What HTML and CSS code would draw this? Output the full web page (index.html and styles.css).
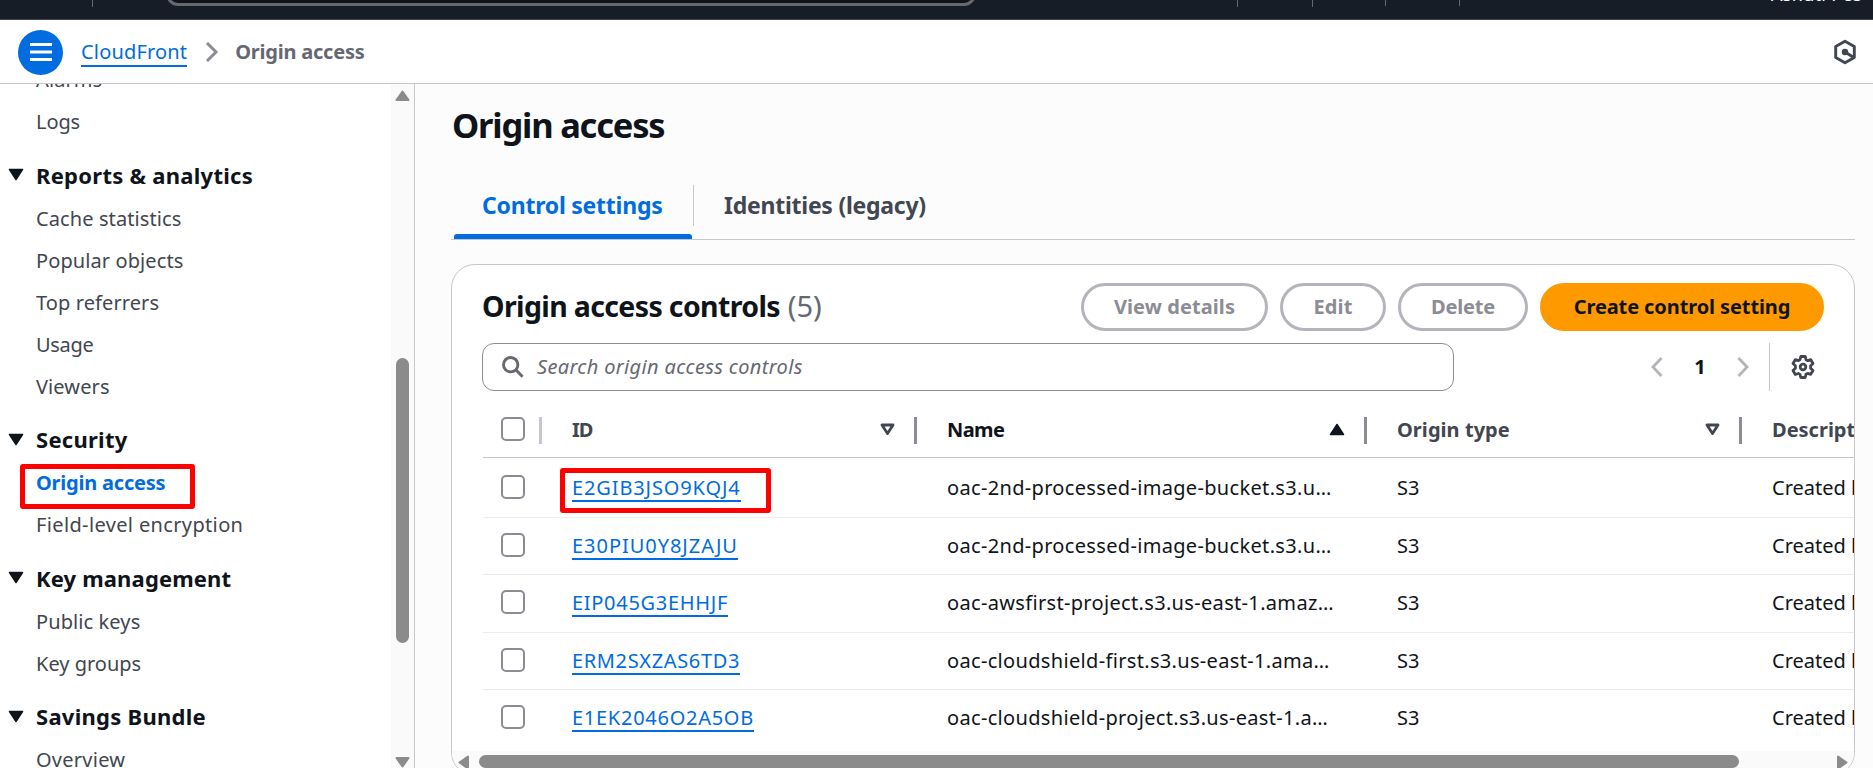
FILE: index.html
```html
<!DOCTYPE html>
<html lang="en">
<head>
<meta charset="utf-8">
<title>Origin access - CloudFront</title>
<link rel="stylesheet" href="styles.css">
</head>
<body>
<header class="topbar">
  <i class="tick tick-left"></i>
  <div class="top-search"></div>
  <i class="tick tick-a"></i><i class="tick tick-b"></i><i class="tick tick-c"></i><i class="tick tick-d"></i>
  <span class="account">Ashutl Pes</span>
</header>
<nav class="crumbs">
  <button class="menu-btn" aria-label="Menu"><svg width="22" height="18" viewBox="0 0 22 18"><path d="M0 1.5h22M0 9h22M0 16.5h22" stroke="#fff" stroke-width="2.8"/></svg></button>
  <a class="link crumb-link">CloudFront</a>
  <svg class="crumb-sep" width="14" height="22" viewBox="0 0 14 22"><path d="M2 2l9 9-9 9" fill="none" stroke="#8c8c94" stroke-width="3"/></svg>
  <span class="crumb-current">Origin access</span>
  <svg class="hex" width="24" height="26" viewBox="0 0 24 26"><path d="M12 2.3l9.3 5.2v11L12 23.700l-9.300-5.200v-11z" fill="none" stroke="#424650" stroke-width="2.900" stroke-linejoin="round"/><circle cx="12" cy="13" r="3.200" fill="#424650"/><path d="M12 13l8 5" stroke="#424650" stroke-width="3"/></svg>
</nav>
<div class="shell">
  <aside class="side">
    <div class="side-list">
      <a class="item">Alarms</a>
      <a class="item logs">Logs</a>
      <h3 class="group"><svg width="16" height="13" viewBox="0 0 16 13"><path d="M1.500 1.500h13L8 11.500z" fill="#0f141a" stroke="#0f141a" stroke-width="1.500" stroke-linejoin="round"/></svg><span class="g1">Reports &amp; analytics</span></h3>
      <a class="item">Cache statistics</a>
      <a class="item">Popular objects</a>
      <a class="item">Top referrers</a>
      <a class="item usage">Usage</a>
      <a class="item">Viewers</a>
      <h3 class="group"><svg width="16" height="13" viewBox="0 0 16 13"><path d="M1.500 1.500h13L8 11.500z" fill="#0f141a" stroke="#0f141a" stroke-width="1.500" stroke-linejoin="round"/></svg><span class="g2">Security</span></h3>
      <a class="item active">Origin access</a>
      <a class="item field">Field-level encryption</a>
      <h3 class="group"><svg width="16" height="13" viewBox="0 0 16 13"><path d="M1.500 1.500h13L8 11.500z" fill="#0f141a" stroke="#0f141a" stroke-width="1.500" stroke-linejoin="round"/></svg><span class="g3">Key management</span></h3>
      <a class="item">Public keys</a>
      <a class="item keyg">Key groups</a>
      <h3 class="group"><svg width="16" height="13" viewBox="0 0 16 13"><path d="M1.500 1.500h13L8 11.500z" fill="#0f141a" stroke="#0f141a" stroke-width="1.500" stroke-linejoin="round"/></svg><span class="g4">Savings Bundle</span></h3>
      <a class="item over">Overview</a>
    </div>
    <div class="vscroll">
      <svg width="15" height="11" viewBox="0 0 15 11"><path d="M7.500 1.500L13.500 10h-12z" fill="#8b8b8b" stroke="#8b8b8b" stroke-width="2" stroke-linejoin="round"/></svg>
      <i class="vthumb"></i>
      <svg class="vdown" width="15" height="11" viewBox="0 0 15 11"><path d="M7.500 9.500L13.500 1h-12z" fill="#8b8b8b" stroke="#8b8b8b" stroke-width="2" stroke-linejoin="round"/></svg>
    </div>
  </aside>
  <main class="main">
    <h1>Origin access</h1>
    <div class="tabs">
      <a class="tab tab-on">Control settings</a>
      <a class="tab tab-off">Identities (legacy)</a>
    </div>
    <section class="card">
      <div class="card-head">
        <h2>Origin access controls <span class="count">(5)</span></h2>
        <div class="actions">
          <button class="btn b-view">View details</button>
          <button class="btn b-edit">Edit</button>
          <button class="btn b-del">Delete</button>
          <button class="btn primary">Create control setting</button>
        </div>
      </div>
      <div class="tools">
        <div class="search">
          <svg width="24" height="24" viewBox="0 0 24 24"><circle cx="9.700" cy="9.700" r="7.200" fill="none" stroke="#656871" stroke-width="2.900"/><path d="M14.800 14.800l6.800 6.900" stroke="#656871" stroke-width="3"/></svg>
          <span>Search origin access controls</span>
        </div>
        <div class="pager">
          <svg width="12" height="20" viewBox="0 0 12 20"><path d="M10.500 1L2 10l8.500 9" fill="none" stroke="#b4b4bb" stroke-width="2.800"/></svg>
          <b>1</b>
          <svg width="12" height="20" viewBox="0 0 12 20"><path d="M1.500 1l8.500 9-8.500 9" fill="none" stroke="#b4b4bb" stroke-width="2.800"/></svg>
        </div>
        <div class="prefs">
          <svg width="24" height="24" viewBox="0 0 24 24" fill="none" stroke="#424650" stroke-width="2.800" stroke-linejoin="round"><path d="M9.800 1.500h4.400l.8 3.200 1.600.900 3.100-1 2.300 3.900-2.400 2.300v2.400l2.400 2.300-2.300 3.900-3.100-1-1.600.900-.8 3.200H9.800L9 19.400l-1.600-.900-3.100 1L2 15.500l2.400-2.300v-2.400L2 8.500l2.300-3.900 3.100 1L9 4.700z"/><circle cx="12" cy="12" r="2.800"/></svg>
        </div>
      </div>
      <div class="table">
        <div class="row head">
          <div class="c-check"><i class="box"></i></div>
          <div class="c-id"><span class="t-id">ID</span><svg width="15" height="13" viewBox="0 0 15 13"><path d="M2 2h11L7.500 10.500z" fill="none" stroke="#424650" stroke-width="2.800" stroke-linejoin="round"/></svg></div>
          <div class="c-name dark"><span class="t-name">Name</span><svg width="16" height="13" viewBox="0 0 16 13"><path d="M8 1.500l6.500 10h-13z" fill="#0f141a" stroke="#0f141a" stroke-width="1.500" stroke-linejoin="round"/></svg></div>
          <div class="c-type"><span class="t-type">Origin type</span><svg width="15" height="13" viewBox="0 0 15 13"><path d="M2 2h11L7.500 10.500z" fill="none" stroke="#424650" stroke-width="2.800" stroke-linejoin="round"/></svg></div>
          <div class="c-desc">Description</div>
        </div>
        <div class="row r1"><div class="c-check"><i class="box"></i></div><div class="c-id"><a class="link">E2GIB3JSO9KQJ4</a><i class="mark"></i></div><div class="c-name">oac-2nd-processed-image-bucket.s3.u…</div><div class="c-type">S3</div><div class="c-desc">Created by CloudFront</div></div>
        <div class="row r2"><div class="c-check"><i class="box"></i></div><div class="c-id"><a class="link">E30PIU0Y8JZAJU</a></div><div class="c-name">oac-2nd-processed-image-bucket.s3.u…</div><div class="c-type">S3</div><div class="c-desc">Created by CloudFront</div></div>
        <div class="row r3"><div class="c-check"><i class="box"></i></div><div class="c-id"><a class="link">EIP045G3EHHJF</a></div><div class="c-name">oac-awsfirst-project.s3.us-east-1.amaz…</div><div class="c-type">S3</div><div class="c-desc">Created by CloudFront</div></div>
        <div class="row r4"><div class="c-check"><i class="box"></i></div><div class="c-id"><a class="link">ERM2SXZAS6TD3</a></div><div class="c-name">oac-cloudshield-first.s3.us-east-1.ama…</div><div class="c-type">S3</div><div class="c-desc">Created by CloudFront</div></div>
        <div class="row r5"><div class="c-check"><i class="box"></i></div><div class="c-id"><a class="link">E1EK2046O2A5OB</a></div><div class="c-name">oac-cloudshield-project.s3.us-east-1.a…</div><div class="c-type">S3</div><div class="c-desc">Created by CloudFront</div></div>
      </div>
      <div class="hscroll">
        <svg width="11" height="15" viewBox="0 0 11 15"><path d="M1.500 7.500L10 1.500v12z" fill="#8b8b8b" stroke="#8b8b8b" stroke-width="2" stroke-linejoin="round"/></svg>
        <i class="hthumb"></i>
        <svg class="hright" width="11" height="15" viewBox="0 0 11 15"><path d="M9.500 7.500L1 1.500v12z" fill="#8b8b8b" stroke="#8b8b8b" stroke-width="2" stroke-linejoin="round"/></svg>
      </div>
    </section>
  </main>
</div>
</body>
</html>
```
FILE: styles.css
```css
*,*::before,*::after{box-sizing:border-box}
body{margin:0;width:1873px;height:768px;overflow:hidden;background:#fff;color:#0f141a;font:20px/42px "Noto Sans",sans-serif;display:flex;flex-direction:column}
h1,h2,h3{margin:0}
svg{display:block;flex:none}
button{font:inherit;margin:0;padding:0}

.topbar{position:relative;flex:none;height:20px;background:#161d26;border-bottom:1px solid #424650;overflow:hidden}
.tick{position:absolute;top:0;width:1px;height:6px;background:#656871}
.tick-left{left:92px;height:7px}
.tick-a{left:1237px;height:7px}.tick-b{left:1312px;height:7px}.tick-c{left:1385px}.tick-d{left:1459px}
.top-search{position:absolute;left:166px;top:-30px;width:810px;height:36px;border:3px solid #656871;border-radius:12px;background:#0f141a}
.account{position:absolute;left:1771px;top:-16px;font-size:18px;line-height:20px;color:#fff;font-weight:400;letter-spacing:.3px}

.crumbs{flex:none;height:64px;border-bottom:1px solid #c6c6cd;display:flex;align-items:center;padding:0 16px 0 18px}
.menu-btn{width:45px;height:45px;border:0;border-radius:50%;background:#006ce0;display:flex;align-items:center;justify-content:center;margin:1px 18px 0 0}
.link{color:#006ce0;border-bottom:2px solid #006ce0;line-height:26px;height:28px;display:block}
.crumb-link{letter-spacing:.17px;margin-top:2px}
.crumb-sep{margin:0 16px 0 18px}
.crumb-current{font-weight:700;letter-spacing:-.22px;color:#656871}
.hex{margin-left:auto}

.shell{flex:1;min-height:0;display:flex}
.side{flex:none;width:415px;border-right:1px solid #c6c6cd;display:flex;overflow:hidden}
.side-list{flex:1;display:flex;flex-direction:column;margin-top:-25px;padding-left:8px}
.item{flex:none;height:42px;padding-left:28px;color:#424650;position:relative;letter-spacing:.1px}
.item.active{font-weight:700;color:#006ce0;letter-spacing:-.22px}
.active::after{content:"";position:absolute;left:12px;top:2px;width:175px;height:45px;border:5px solid #f00;border-radius:3px}
.item.logs{letter-spacing:-.1px}.item.usage{letter-spacing:-.3px}.item.field{letter-spacing:.36px}.item.keyg{letter-spacing:0}.item.over{letter-spacing:.25px}
.group{flex:none;height:54.5px;padding-top:8.5px;font-size:22px;font-weight:700;display:flex;align-items:center}
.group svg{margin:0 12px 0 0}
.g1,.g2,.g4{letter-spacing:.27px}.g3{letter-spacing:.15px}
.vscroll{flex:none;width:23px;background:#fafafa;padding:6px 4px 0;height:684px}
.vthumb{display:block;width:13px;height:285px;border-radius:7px;background:#8b8b8b;margin:257px 0 0 1px}
.vdown{margin-top:114px}

.main{flex:1;min-width:0;background:#fcfcfd;padding:19px 18px 0 36px;overflow:hidden}
h1{font-size:34.500px;line-height:44px;font-weight:700;letter-spacing:-1.200px;padding-left:1px}
.tabs{display:flex;height:65px;margin-top:28px;border-bottom:1px solid #c6c6cd;font-size:23px;font-weight:700;width:1404px}
.tab{position:relative;line-height:60px;height:64px;letter-spacing:-.23px}
.tab-on{width:243px;padding-left:31px;color:#006ce0}
.tab-on::before{content:"";position:absolute;left:3px;right:2px;bottom:0;height:5px;border-radius:3px 3px 0 0;background:#006ce0}
.tab-on::after{content:"";position:absolute;right:0;top:10px;width:1px;height:41px;background:#c6c6cd}
.tab-off{padding-left:30px;color:#424650;letter-spacing:-.25px}
.card{margin-top:24px;width:1404px;height:512px;border:1px solid #c6c6cd;border-radius:24px;background:#fff;overflow:hidden;display:flex;flex-direction:column}
.card-head{flex:none;display:flex;justify-content:space-between;padding:18px 30px 0 30px}
h2{font-size:28.500px;font-weight:700;letter-spacing:-.640px;line-height:46px;white-space:pre}
.count{font-size:29px;font-weight:400;color:#656871;letter-spacing:0;margin-left:1px}
.actions{display:flex;gap:12px}
.btn{height:48px;border:3px solid #b4b4bb;border-radius:24px;background:#fff;color:#8c8c94;font-weight:700;line-height:42px;text-align:center}
.b-view{width:187px;letter-spacing:.08px}.b-edit{width:106px;letter-spacing:.13px}.b-del{width:130px;letter-spacing:-.2px}
.primary{width:284px;background:#f90;border-color:#f90;color:#0f141a;letter-spacing:-.1px}
.tools{flex:none;display:flex;margin-top:12px;padding:0 30px;height:48px}
.search{width:972px;border:1px solid #8c8c94;border-radius:12px;display:flex;align-items:center;padding-left:18px;gap:12px;font-style:italic;color:#656871;line-height:40px}
.search span{letter-spacing:.34px}
.pager{display:flex;align-items:center;margin-left:197px}
.pager b{width:74px;text-align:center;font-weight:700;line-height:46px}
.prefs{margin-left:20px;border-left:1px solid #c6c6cd;display:flex;align-items:center;padding-left:21px}
.table{flex:none;display:flex;flex-direction:column;padding-left:31px;margin-top:13px}
.row{flex:none;height:57px;display:grid;grid-template-columns:89px 375px 450px 375px 400px;align-items:start;white-space:nowrap;border-bottom:1px solid #ebebf0}
.row.head{height:54px;font-weight:700;color:#424650;border-color:#c6c6cd}
.dark{color:#0f141a}
.box{display:block;width:24px;height:24px;border:2px solid #8c8c94;border-radius:5px;background:#fff}
.c-check{padding:15px 0 0 18px}
.c-id{padding-top:12px;position:relative;display:flex}
.c-name,.c-type,.c-desc{padding-top:7px}
.head .c-check{display:flex;padding-top:13px;height:53px}
.head .c-check::after{content:"";width:3px;height:27px;background:#c6c6cd;margin-left:14px}
.head .c-id,.head .c-name,.head .c-type{display:flex;justify-content:space-between;align-items:center;height:51px;position:relative;padding:0}
.head .c-id::after,.head .c-name::after,.head .c-type::after{content:"";position:absolute;right:30px;top:13px;width:3px;height:27px;background:#8c8c94}
.head svg{margin-right:52px}
.head .c-desc{line-height:51px;padding:0}
.t-id{letter-spacing:-1px}.t-name{letter-spacing:-.6px}.t-type{letter-spacing:.05px}
.row.r1{height:60px;padding-top:2px}.row.r3{height:58px}.row.r5{border:0}
.r1 .link{letter-spacing:.87px}.r2 .link{letter-spacing:.96px}.r3 .link{letter-spacing:.7px}.r4 .link{letter-spacing:.64px}.r5 .link{letter-spacing:.73px}
.c-id .link{margin-top:2px;line-height:28px}
.c-name{letter-spacing:.33px}
.head .c-name{letter-spacing:0}
.mark{position:absolute;left:-12px;top:8px;width:211px;height:45px;border:5px solid #f00;border-radius:3px}
.hscroll{flex:none;height:24px;background:#fafafa;display:flex;padding:4px 6px 0;margin-top:auto}
.hthumb{width:1260px;height:13px;border-radius:7px;background:#8b8b8b;margin:0 0 0 10px}
.hright{margin-left:auto}
```
